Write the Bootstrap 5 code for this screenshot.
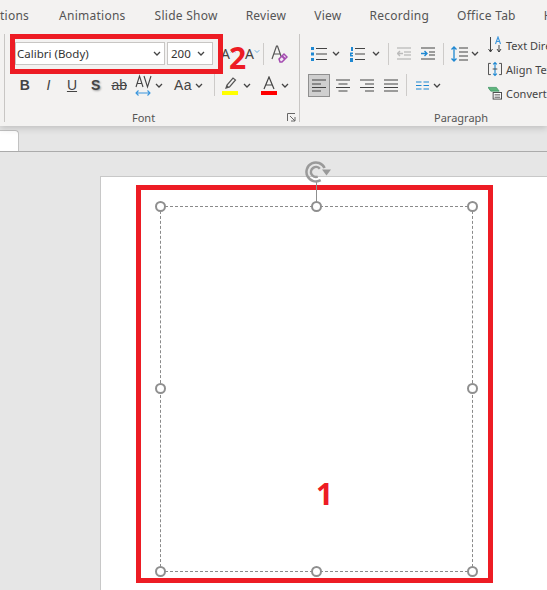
<!DOCTYPE html>
<html lang="en">
<head>
<meta charset="utf-8">
<title>Slide editor</title>
<link href="https://cdn.jsdelivr.net/npm/bootstrap@5.3.0/dist/css/bootstrap.min.css" rel="stylesheet">
<style>
html,body{width:547px;height:590px;overflow:hidden;background:#e6e6e6}
body{font-family:"Noto Sans","Open Sans",sans-serif;color:#444;font-size:12px;line-height:1}
.rb{height:126px;background:#f3f2f1;box-shadow:0 2px 7px rgba(0,0,0,.18);position:relative;z-index:2}
.tabsrow{height:32px;gap:28px;white-space:nowrap;padding-top:10px;font-size:12px;letter-spacing:.25px;color:#555}
.fgroup{width:296px;margin-left:4px;margin-top:2px;height:88px;border-left:1px solid #c8c6c4;border-right:1px solid #c8c6c4;position:relative;flex:none}
.pgroup{flex:1 1 auto;height:94px;position:relative;overflow:hidden;white-space:nowrap}
.r1{height:23px;margin-top:8px}
.pgroup .r1{margin-top:10px}
.r2{height:26px;margin-top:7px}
.grp-label{position:absolute;top:78px;color:#555;font-size:11px}
.lab-font{left:127px}
.lab-para{left:134px;top:80px}
.combo{height:23px;background:#fff;border:1px solid #c8c6c4;color:#333;font-size:11.5px;padding:0 3px 0 1px;flex:none}
.c-font{width:150px;margin-left:10px}
.c-size{width:46px;margin-left:2px;padding-left:3px}
.sl{width:23.6px;height:26px;flex:none;color:#444}
.tb{font-family:"Liberation Sans",sans-serif;font-size:14px}
.shadowed{text-shadow:1px 1px 2px #999}
.aa{font-size:14px;letter-spacing:.5px}
.sep{width:1px;height:22px;background:#cdcbc9;flex:none}
.wA{font-size:14px;color:#444}
.launch{position:absolute;left:282px;top:79px}
.al-on{width:22px;height:23px;background:#cfcfcf;border:1px solid #8f8f8f;flex:none}
.pcol{width:188px;flex:none}
.pright{color:#444;font-size:11px;padding-top:4px;gap:6px}
.pright>div{height:18px}
svg{flex:none}
.sp1{margin-left:1px}.sp2{margin-left:2px}.sp3{margin-left:3px}.sp4{margin-left:4px}.sp5{margin-left:5px}.sp6{margin-left:6px}.sp7{margin-left:7px}
.sp8{margin-left:8px}.sp9{margin-left:9px}.sp10{margin-left:10px}.sp11{margin-left:11px}
.strip{height:26px;border-bottom:1px solid #ababab;align-items:flex-end}
.thumbtab{width:19px;height:21px;background:#fff;border:1px solid #c2c2c2;border-left:0;border-bottom:0;border-top-right-radius:4px}
.slide{margin:24px 0 0 100px;height:420px;background:#fff;border:1px solid #c8c8c8;border-right:0;position:relative}
.redframe{position:absolute;left:35px;top:8px;width:357px;height:398px;border:5px solid #ed1c24}
.fontframe{position:absolute;left:10px;top:34px;width:213px;height:40px;border:5px solid #ed1c24;z-index:3;pointer-events:none}
.callout{position:absolute;font-family:"Open Sans",sans-serif;font-weight:700;font-size:30px;line-height:1;color:#ed1c24;z-index:4}
.n2{left:229px;top:43px}
.n1{left:215px;top:302px}
.selbox{position:absolute;left:59px;top:29px;width:313px;height:366px;border:1px dashed #8a8a8a}
.hd{position:absolute;width:11px;height:11px;border:2px solid #8f8f8f;border-radius:50%;background:#fff}
.h-tl{left:54px;top:24px}.h-tc{left:210px;top:24px}.h-tr{left:366px;top:24px}
.h-ml{left:54px;top:206px}.h-mr{left:366px;top:206px}
.h-bl{left:54px;top:389px}.h-bc{left:210px;top:389px}.h-br{left:366px;top:389px}
.rotline{position:absolute;left:215px;top:5px;width:1px;height:20px;background:#8f8f8f}
.rot{position:absolute;left:204px;top:-17px}
</style>
</head>
<body>
<svg width="0" height="0" class="position-absolute">
<symbol id="chev" viewBox="0 0 8 5"><path d="M1 1l3 3 3-3" fill="none" stroke="#444" stroke-width="1.3"/></symbol>
</svg>
<div class="rb">
 <div class="tabsrow d-flex"><span>tions</span><span class="sp2">Animations</span><span class="sp1">Slide Show</span><span>Review</span><span>View</span><span>Recording</span><span>Office Tab</span><span>H</span></div>
 <div class="d-flex">
  <div class="fgroup">
   <div class="r1 d-flex align-items-center">
    <div class="combo c-font d-flex align-items-center justify-content-between"><span>Calibri (Body)</span><svg width="8" height="5"><use href="#chev"/></svg></div>
    <div class="combo c-size d-flex align-items-center justify-content-between"><span>200</span><svg width="8" height="5" class="me-1"><use href="#chev"/></svg></div>
    <span class="wA sp8">A</span>
    <svg width="6" height="14" viewBox="0 0 8 14"><path d="M1 5l3-3 3 3" fill="none" stroke="#5aa7e0" stroke-width="1.2"/></svg>
    <span class="wA sp9">A</span>
    <svg width="6" height="14" viewBox="0 0 8 14"><path d="M1 2l3 3 3-3" fill="none" stroke="#5aa7e0" stroke-width="1.2"/></svg>
    <span class="sep sp3"></span>
    <svg class="sp7" width="17" height="18" viewBox="0 0 17 18"><path d="M1 14L5.500 1h1L11 14M3 9h6" fill="none" stroke="#555" stroke-width="1.2"/><path d="M8 14l5-5 3 3-5 5H9z" fill="#f3e6f5" stroke="#a44cb0" stroke-width="1.5"/><path d="M11 11l3 3" stroke="#a44cb0" stroke-width="2"/></svg>
   </div>
   <div class="r2 d-flex align-items-center ps-2">
    <span class="sl tb d-flex align-items-center justify-content-center fw-bold">B</span>
    <span class="sl tb d-flex align-items-center justify-content-center fst-italic">I</span>
    <span class="sl tb d-flex align-items-center justify-content-center text-decoration-underline">U</span>
    <span class="sl tb d-flex align-items-center justify-content-center fw-bold shadowed">S</span>
    <span class="sl tb d-flex align-items-center justify-content-center text-decoration-line-through">ab</span>
    <svg class="sp4" width="17" height="22" viewBox="0 0 17 22"><path d="M1 19h14M3.500 16.500L1 19l2.500 2.500M12.500 16.500L15 19l-2.500 2.500" fill="none" stroke="#3a96dd" stroke-width="1.1"/><path d="M1 13L4.500 2 8 13M2.300 9.500h4.500M9 2l3.500 11L16 2" fill="none" stroke="#444" stroke-width="1.1"/></svg>
    <svg class="sp3" width="8" height="5"><use href="#chev"/></svg>
    <span class="sp11 tb aa">Aa</span>
    <svg class="sp3" width="8" height="5"><use href="#chev"/></svg>
    <span class="sep sp11"></span>
    <svg class="sp7" width="16" height="19" viewBox="0 0 16 19"><path d="M4 12l1-3 6-7 2.500 2-6 7z" fill="none" stroke="#555" stroke-width="1.2"/><path d="M4 12l3-1-2-2z" fill="#555"/><rect y="15" width="16" height="4" fill="#ffff00"/></svg>
    <svg class="sp5" width="8" height="5"><use href="#chev"/></svg>
    <svg class="sp10" width="16" height="19" viewBox="0 0 16 19"><path d="M3 13L8 1l5 12M4.700 9h6.600" fill="none" stroke="#444" stroke-width="1.2"/><rect y="15" width="16" height="4" fill="#ff0000"/></svg>
    <svg class="sp4" width="8" height="5"><use href="#chev"/></svg>
   </div>
   <div class="grp-label lab-font">Font</div>
   <svg class="launch" width="9" height="9" viewBox="0 0 9 9"><path d="M.5 8V.5H8M3 3l5 5M4 8h4V4" fill="none" stroke="#666"/></svg>
  </div>
  <div class="pgroup d-flex">
   <div class="pcol">
    <div class="r1 d-flex align-items-center">
     <svg class="sp11" width="16" height="16" viewBox="0 0 16 16"><path d="M0 1h3v3H0zM0 6.500h3v3H0zM0 12h3v3H0z" fill="#1e88d2"/><path d="M5 2.500h11M5 8h11M5 13.500h11" stroke="#444" stroke-width="1.2"/></svg>
     <svg class="sp5" width="8" height="5"><use href="#chev"/></svg>
     <svg class="sp10" width="15" height="16" viewBox="0 0 15 16"><path d="M1 1h2v4H1zM0 6.500h3v1.500H1.500V9H3v1.500H0zM0 12h3v4H0z" fill="#1e88d2"/><path d="M5 2.500h10M5 8h10M5 13.500h10" stroke="#444" stroke-width="1.2"/></svg>
     <svg class="sp7" width="8" height="5"><use href="#chev"/></svg>
     <span class="sep sp8"></span>
     <svg class="sp8" width="15" height="13" viewBox="0 0 15 13"><path d="M0 1h14M7 5h7M7 8h7M0 12h14" stroke="#aaa" stroke-width="1.2"/><path d="M6 6.500H1M3 4L.5 6.500 3 9" fill="none" stroke="#bbb" stroke-width="1.400"/></svg>
     <svg class="sp9" width="15" height="13" viewBox="0 0 15 13"><path d="M0 1h14M8 5h6M8 8h6M0 12h14" stroke="#444" stroke-width="1.2"/><path d="M0 6.500h5M3.500 4L6 6.500 3.500 9" fill="none" stroke="#1e88d2" stroke-width="1.400"/></svg>
     <span class="sep sp7"></span>
     <svg class="sp7" width="17" height="16" viewBox="0 0 17 16"><path d="M3 1v14M.5 3.500L3 1l2.500 2.500M.5 12.500L3 15l2.500-2.500" fill="none" stroke="#1e88d2" stroke-width="1.300"/><path d="M8 2h9M8 6h9M8 10h9M8 14h9" stroke="#444" stroke-width="1.2"/></svg>
     <svg class="sp3" width="8" height="5"><use href="#chev"/></svg>
    </div>
    <div class="r2 d-flex align-items-center">
     <span class="al-on sp8 d-flex align-items-center justify-content-center"><svg width="14" height="13" viewBox="0 0 14 13"><path d="M0 1h14M0 5h9M0 8.500h14M0 12h9" stroke="#444" stroke-width="1.2"/></svg></span>
     <svg class="sp6" width="14" height="13" viewBox="0 0 14 13"><path d="M0 1h14M2.500 5h9M0 8.500h14M2.500 12h9" stroke="#444" stroke-width="1.2"/></svg>
     <svg class="sp10" width="14" height="13" viewBox="0 0 14 13"><path d="M0 1h14M5 5h9M0 8.500h14M5 12h9" stroke="#444" stroke-width="1.2"/></svg>
     <svg class="sp10" width="14" height="13" viewBox="0 0 14 13"><path d="M0 1h14M0 5h14M0 8.500h14M0 12h14" stroke="#444" stroke-width="1.2"/></svg>
     <span class="sep sp8"></span>
     <svg class="sp9" width="13" height="9" viewBox="0 0 13 9"><path d="M0 1h5.500M0 4.500h5.500M0 8h5.500M7.500 1H13M7.500 4.500H13M7.500 8H13" stroke="#1e88d2" stroke-width="1.2"/></svg>
     <svg class="sp4" width="8" height="5"><use href="#chev"/></svg>
    </div>
   </div>
   <div class="pright d-flex flex-column">
    <div class="d-flex align-items-center gap-1"><svg width="14" height="18" viewBox="0 0 14 18"><path d="M2.500 1v15M.5 13l2 3 2-3M11 9v7M9 13l2 3 2-3" fill="none" stroke="#444" stroke-width="1"/><path d="M7.500 8L10 1l2.500 7M8.500 5.500h3" fill="none" stroke="#3a96dd" stroke-width="1.1"/></svg><span>Text Direction</span></div>
    <div class="d-flex align-items-center gap-1"><svg width="14" height="16" viewBox="0 0 15 16"><path d="M3 2H.5v12H3M12 2h2.500v12H12" fill="none" stroke="#444"/><path d="M7.500 1v14M5.500 3l2-2 2 2M5.500 13l2 2 2-2" fill="none" stroke="#1e88d2" stroke-width="1.2"/><path d="M5 8h5" stroke="#444"/></svg><span>Align Text</span></div>
    <div class="d-flex align-items-center gap-1"><svg width="14" height="16" viewBox="0 0 15 16"><path d="M0 2h9l3 4H3z" fill="#5fb57d" stroke="#2e8b57" stroke-width=".7"/><rect x="5.500" y="7.500" width="9" height="7" fill="#fff" stroke="#444"/><path d="M7 10h6M7 12.500h6" stroke="#444"/></svg><span>Convert to SmartArt</span></div>
   </div>
   <div class="grp-label lab-para">Paragraph</div>
  </div>
 </div>
</div>
<div class="strip d-flex"><div class="thumbtab"></div></div>
<div class="slide">
 <div class="redframe"></div>
 <div class="selbox"></div>
 <div class="rotline"></div>
 <svg class="rot" width="26" height="24" viewBox="0 0 26 24"><path d="M19.600 8A9.500 9.500 0 1 0 15.700 20.200" fill="none" stroke="#9a9a9a" stroke-width="2.500"/><path d="M14.800 8.800A5 5 0 1 0 12.700 16.700" fill="none" stroke="#9a9a9a" stroke-width="2.500"/><path d="M17 9.500h9l-4.500 6z" fill="#9a9a9a"/></svg>
 <div class="hd h-tl"></div><div class="hd h-tc"></div><div class="hd h-tr"></div>
 <div class="hd h-ml"></div><div class="hd h-mr"></div>
 <div class="hd h-bl"></div><div class="hd h-bc"></div><div class="hd h-br"></div>
 <div class="callout n1">1</div>
</div>
<div class="fontframe"></div>
<div class="callout n2">2</div>
</body>
</html>
